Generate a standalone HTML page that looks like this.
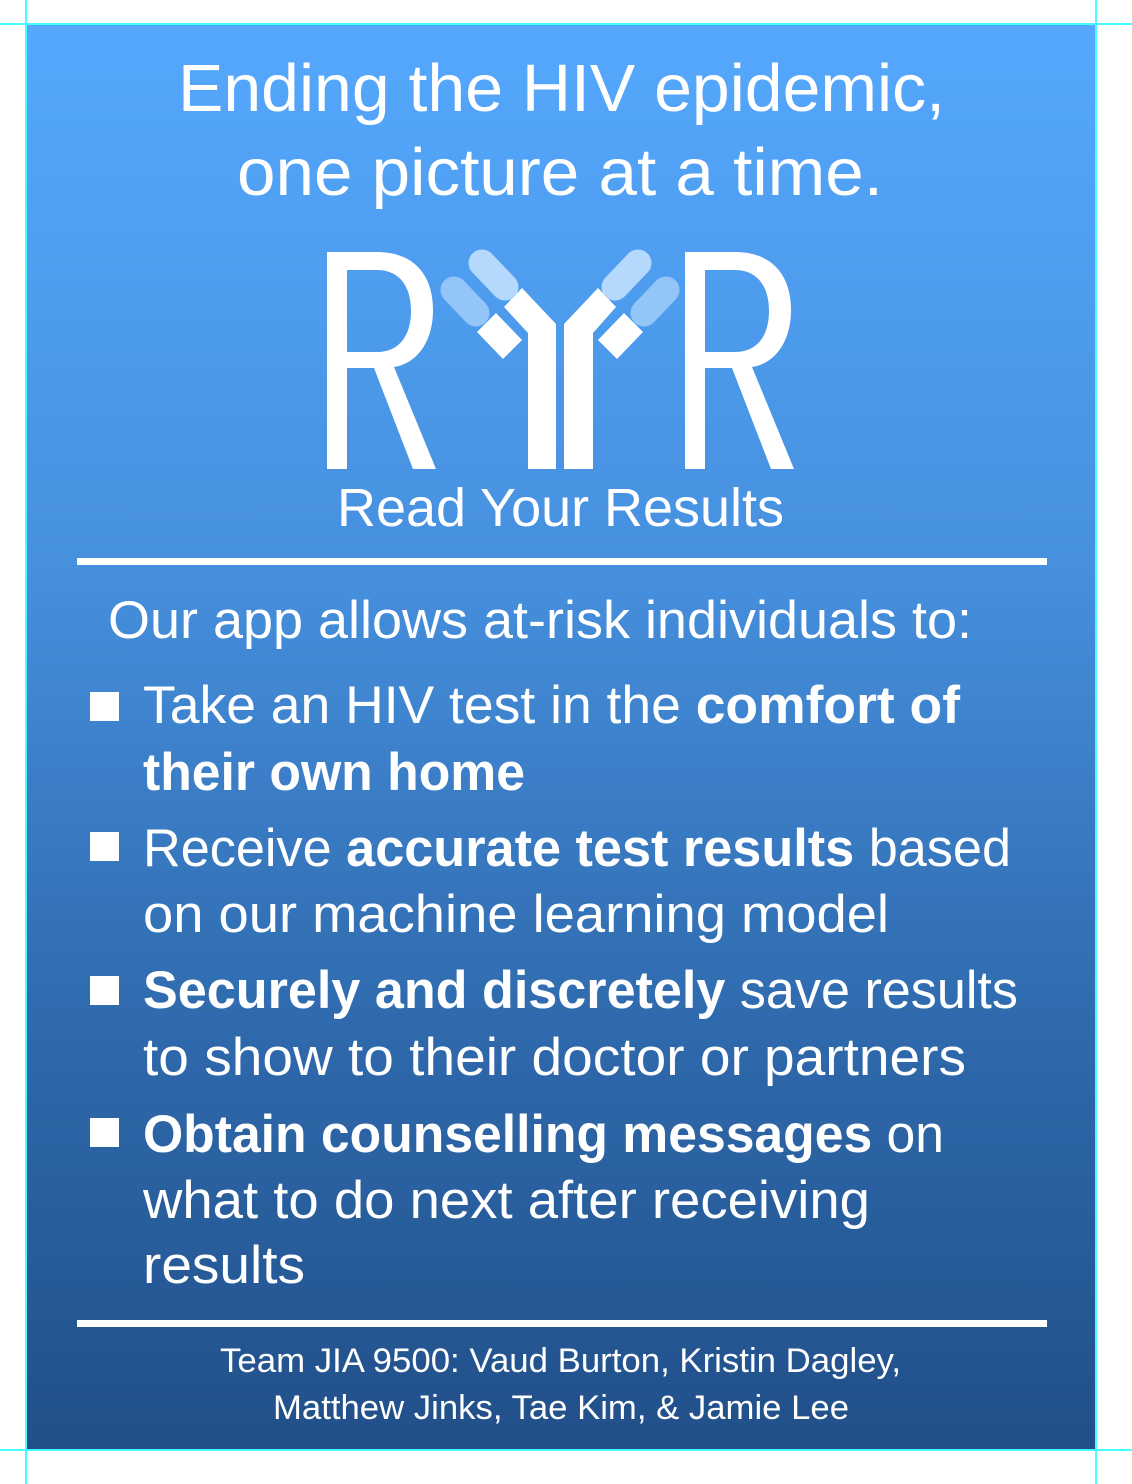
<!DOCTYPE html>
<html><head><meta charset="utf-8"><style>
html,body{margin:0;padding:0;background:#fff;}
svg{display:block;}
text{font-family:"Liberation Sans",sans-serif;fill:#fff;}
.b{font-weight:bold;}
</style></head><body>
<svg width="1132" height="1484" viewBox="0 0 1132 1484" xmlns="http://www.w3.org/2000/svg">
<defs>
<linearGradient id="g" x1="0" y1="0" x2="0" y2="1">
<stop offset="0" stop-color="#55a8fe"/>
<stop offset="0.38" stop-color="#4690de"/>
<stop offset="0.7" stop-color="#2f6aad"/>
<stop offset="1" stop-color="#214f89"/>
</linearGradient>
</defs>
<rect x="27" y="25" width="1068" height="1424" fill="url(#g)"/>
<rect x="0" y="23" width="1132" height="2" fill="#4ff"/>
<rect x="0" y="1449" width="1132" height="2" fill="#4ff"/>
<rect x="25" y="0" width="2" height="1484" fill="#4ff"/>
<rect x="1095" y="0" width="2" height="1484" fill="#4ff"/>

<text x="178" y="111" font-size="67" textLength="767" lengthAdjust="spacingAndGlyphs">Ending the HIV epidemic,</text>
<text x="237" y="195" font-size="67" textLength="646" lengthAdjust="spacingAndGlyphs">one picture at a time.</text>

<!-- logo -->
<g fill="#fff" fill-rule="evenodd">
<path d="M327 252H377C413 252 433 274 433 310C433 344 415 364 394 367L436 469H413L374 368H347V469H327ZM347 270V352H377C399 352 411 336 411 311C411 286 399 270 377 270Z"/>
<path transform="translate(358 0)" d="M327 252H377C413 252 433 274 433 310C433 344 415 364 394 367L436 469H413L374 368H347V469H327ZM347 270V352H377C399 352 411 336 411 311C411 286 399 270 377 270Z"/>
<polygon points="556,324 522,288 504,307 528,333 528,469 556,469"/>
<polygon points="564,324 598,288 616,307 593,333 593,469 564,469"/>
<polygon points="477,332 496,313 522,340 503,359"/>
<polygon points="643,332 624,313 598,340 617,359"/>
</g>
<g stroke-linecap="round" stroke-width="27">
<line x1="482" y1="263" x2="505" y2="287" stroke="#b5d9fc"/>
<line x1="638" y1="263" x2="615" y2="287" stroke="#b5d9fc"/>
<line x1="454" y1="290" x2="476" y2="313" stroke="#93c5f8"/>
<line x1="666" y1="290" x2="644" y2="313" stroke="#93c5f8"/>
</g>
<text x="337" y="526" font-size="54" textLength="447" lengthAdjust="spacingAndGlyphs">Read Your Results</text>

<rect x="77" y="558" width="970" height="7" fill="#fff"/>
<text x="108" y="638" font-size="53" textLength="864" lengthAdjust="spacingAndGlyphs">Our app allows at-risk individuals to:</text>

<g fill="#fff">
<rect x="90" y="692" width="29" height="29"/>
<rect x="90" y="832" width="29" height="29"/>
<rect x="90" y="976" width="29" height="29"/>
<rect x="90" y="1118" width="29" height="29"/>
</g>
<g font-size="53">
<text x="143" y="723" textLength="817" lengthAdjust="spacingAndGlyphs">Take an HIV test in the <tspan class="b">comfort of</tspan></text>
<text x="143" y="790" class="b" textLength="382" lengthAdjust="spacingAndGlyphs">their own home</text>
<text x="143" y="866" textLength="868" lengthAdjust="spacingAndGlyphs">Receive <tspan class="b">accurate test results</tspan> based</text>
<text x="143" y="932" textLength="746" lengthAdjust="spacingAndGlyphs">on our machine learning model</text>
<text x="143" y="1008" textLength="875" lengthAdjust="spacingAndGlyphs"><tspan class="b">Securely and discretely</tspan> save results</text>
<text x="143" y="1075" textLength="823" lengthAdjust="spacingAndGlyphs">to show to their doctor or partners</text>
<text x="143" y="1152" textLength="801" lengthAdjust="spacingAndGlyphs"><tspan class="b">Obtain counselling messages</tspan> on</text>
<text x="143" y="1218" textLength="727" lengthAdjust="spacingAndGlyphs">what to do next after receiving</text>
<text x="143" y="1283" textLength="162" lengthAdjust="spacingAndGlyphs">results</text>
</g>

<rect x="77" y="1320" width="970" height="7" fill="#fff"/>
<text x="220" y="1372" font-size="34" textLength="681" lengthAdjust="spacingAndGlyphs">Team JIA 9500: Vaud Burton, Kristin Dagley,</text>
<text x="273" y="1419" font-size="34" textLength="576" lengthAdjust="spacingAndGlyphs">Matthew Jinks, Tae Kim, &amp; Jamie Lee</text>
</svg>
</body></html>
